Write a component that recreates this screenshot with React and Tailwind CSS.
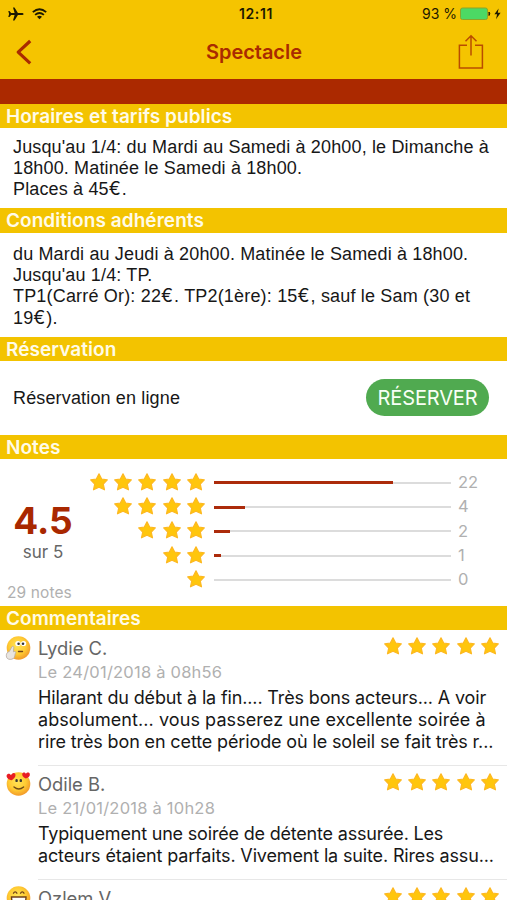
import React from "react";

const RATINGS = [
  { stars: 5, count: 22, percent: 75.6 },
  { stars: 4, count: 4, percent: 13.3 },
  { stars: 3, count: 2, percent: 6.8 },
  { stars: 2, count: 1, percent: 3.2 },
  { stars: 1, count: 0, percent: 0 },
];

const COMMENTS = [
  {
    name: "Lydie C.",
    date: "Le 24/01/2018 à 08h56",
    face: "thinking",
    lines: [
      { text: "Hilarant du début à la fin.... Très bons acteurs... A voir", tracking: "tracking-[-0.14px]" },
      { text: "absolument... vous passerez une excellente soirée à", tracking: "tracking-[0.08px]" },
      { text: "rire très bon en cette période où le soleil se fait très r...", tracking: "tracking-[-0.13px]" },
    ],
  },
  {
    name: "Odile B.",
    date: "Le 21/01/2018 à 10h28",
    face: "love",
    lines: [
      { text: "Typiquement une soirée de détente assurée. Les", tracking: "tracking-[-0.19px]" },
      { text: "acteurs étaient parfaits. Vivement la suite. Rires assu...", tracking: "tracking-[-0.15px]" },
    ],
  },
  { name: "Ozlem V.", date: "", face: "laugh", lines: [] },
];

function Star() {
  return (
    <svg width="18" height="18" viewBox="0 0 18 18" className="block shrink-0">
      <path
        d="M9 .9 L11.7 6 L17.3 6.9 L13.3 11 L14.5 16.8 L9 14.3 L3.5 16.8 L4.7 11 L0.7 6.9 L6.3 6 Z"
        fill="#ffc60c"
        stroke="#fdb822"
        strokeWidth="1.2"
        strokeLinejoin="round"
      />
    </svg>
  );
}

function Stars({ count }) {
  return (
    <div className="flex justify-end gap-[6.3px]">
      {Array.from({ length: count }, (_, i) => (
        <Star key={i} />
      ))}
    </div>
  );
}

function Face({ type }) {
  const id = `face-${type}`;
  return (
    <svg width="26" height="26" viewBox="0 0 26 26" className="block shrink-0">
      <defs>
        <radialGradient id={id} cx="45%" cy="40%" r="60%">
          <stop offset="0" stopColor="#ffe458" />
          <stop offset="0.6" stopColor="#ffcb32" />
          <stop offset="1" stopColor="#f29a2a" />
        </radialGradient>
      </defs>
      <circle cx="13.5" cy="13" r="11.8" fill={`url(#${id})`} />
      {type === "thinking" && (
        <g>
          <ellipse cx="13" cy="8.5" rx="2.7" ry="2.6" fill="#fff" />
          <ellipse cx="18.6" cy="8.5" rx="2.6" ry="2.6" fill="#fff" />
          <circle cx="13.6" cy="8.7" r="1.3" fill="#333" />
          <circle cx="18" cy="8.7" r="1.3" fill="#333" />
          <path d="M13.5 16.5h4" stroke="#70401a" strokeWidth="1.4" strokeLinecap="round" />
          <path
            d="M6.8 12c.6-1.2 2.1-.8 2 .6l-.4 4.2 1.3-.3c1.3-.1 1.4 1.6.5 2.2l-.4 2.3c-.4 2.2-2.2 3.4-4.6 3.4-2.6 0-3.9-1.5-3.9-3.7 0-2.3 1-3.6 3-4.2z"
            fill="#e9e5e0"
            stroke="#b5aaa2"
            strokeWidth="0.8"
          />
        </g>
      )}
      {type === "love" && (
        <g>
          <path d="M11.6 9.3v.6M15.8 9.3v.6" stroke="#3d3a33" strokeWidth="2.4" strokeLinecap="round" />
          <path d="M9 16q4.8 4 9.6 0" fill="none" stroke="#704d18" strokeWidth="1.4" strokeLinecap="round" />
          <path d="M6.8 9.3C3 8.5 1.1 6.3 1.7 4.2c.7-2.1 3.5-2 4.4.1C7.5 1.2 10.3 1.6 10.5 4c.1 2-1.5 3.7-3.7 5.3z" fill="#e81c24" />
          <path d="M20.8 7.6c-2.7-1.6-4.1-3-3.5-4.8.6-1.8 2.8-1.7 3.6 0 1-1.8 3.5-1.6 3.9.2.5 2-1.3 3.5-4 4.6z" fill="#e81c24" />
        </g>
      )}
      {type === "laugh" && (
        <g>
          <path d="M8.2 8.6q2-3.4 4 0M15.3 8.6q2-3.4 4 0" fill="none" stroke="#70401a" strokeWidth="1.3" />
          <path d="M6.5 12h14.5c0 6-3 9.5-7.2 9.5s-7.3-3.5-7.3-9.5z" fill="#fff" stroke="#70401a" strokeWidth="1.4" />
        </g>
      )}
    </svg>
  );
}

function Euro() {
  return <span className="font-['Inter',sans-serif] leading-none tracking-[1px]">€</span>;
}

function SectionTitle({ children }) {
  return (
    <h2 className="h-[24.5px] shrink-0 bg-[#f3c300] pt-px pl-[6px] text-[19px] leading-[24.5px] font-semibold tracking-[0.06px] whitespace-nowrap text-[#fffbe8]">
      {children}
    </h2>
  );
}

function StatusBar() {
  return (
    <div className="grid h-[27px] grid-cols-3 items-center text-[14px] text-[#1d1900]">
      <div className="flex items-center gap-[8px] pl-[8px]">
        <svg width="16" height="14" viewBox="0 0 16 14" fill="currentColor">
          <path d="M15.6 7c0-.7-.8-1.1-1.9-1.1H9.9L6.5.5H5l1.6 5.4H3.1L1.5 4H.3l.8 3-.8 3h1.2l1.6-1.9h3.5L5 13.5h1.5l3.4-5.4h3.8c1.1 0 1.9-.4 1.9-1.1z" />
        </svg>
        <svg width="15" height="12" viewBox="0 0 15 12" fill="none" stroke="currentColor" strokeWidth="1.8">
          <path d="M.8 4.2q6.7-6 13.4 0" />
          <path d="M3.1 6.9q4.4-3.8 8.8 0" />
          <path d="M5 8.8q2.5-1.9 5 0L7.5 11.3z" fill="currentColor" stroke="none" />
        </svg>
      </div>
      <div className="pl-[5px] text-center font-semibold tracking-[0.6px]">12:11</div>
      <div className="flex items-center justify-end pr-[5px]">
        <span className="mr-[3px] whitespace-nowrap">93 %</span>
        <svg width="42" height="14" viewBox="0 0 42 14">
          <rect x="0.5" y="1" width="27" height="11.5" rx="2" fill="#4cd964" stroke="#89a52a" />
          <path d="M29 5q1.5 1.5 0 3.5z" fill="#1d1900" stroke="#1d1900" />
          <path d="M38.6 1.5l-4.2 5.8h2.7l-1.1 5 4.6-6.5h-2.8z" fill="#1d1900" />
        </svg>
      </div>
    </div>
  );
}

function NavBar() {
  return (
    <div className="grid h-[50px] grid-cols-3 items-center text-[#a92b00]">
      <svg width="18" height="26" viewBox="0 0 18 26" className="ml-[15px]">
        <path d="M15.2 2L3.2 13.2l12 11.2" fill="none" stroke="currentColor" strokeWidth="3.2" strokeLinejoin="round" />
      </svg>
      <h1 className="pl-px text-center text-[20px] font-semibold tracking-[-0.05px]">Spectacle</h1>
      <svg width="26" height="36" viewBox="0 0 26 36" className="mr-[23px] justify-self-end" fill="none" stroke="#b94c00" strokeWidth="1.5">
        <path d="M9 11.2H1.4v22.7h23V11.2H17M13 21.5V2M7.5 7.2L13 1.7l5.5 5.5" />
      </svg>
    </div>
  );
}

function Comment({ comment }) {
  return (
    <article className="flex shrink-0 pl-[5px]">
      <div className="pt-[5px]">
        <Face type={comment.face} />
      </div>
      <div className="ml-[7px] flex-1">
        <div className="flex justify-between pt-[7px] pr-[8px]">
          <h3 className="-mt-px text-[18.4px] leading-[24px] tracking-[-0.03px] text-[#666]">{comment.name}</h3>
          <Stars count={5} />
        </div>
        <p className="mt-px h-[23px] text-[16.5px] leading-[23px] tracking-[0.22px] text-[#b0b0b0]">{comment.date}</p>
        <div className="mt-[3px] text-[18px] leading-[22px] whitespace-nowrap text-[#171717]">
          {comment.lines.map((line) => (
            <p key={line.text} className={line.tracking}>{line.text}</p>
          ))}
        </div>
      </div>
    </article>
  );
}

export default function App() {
  return (
    <main className="flex h-[900px] w-[507px] flex-col overflow-hidden bg-white font-['Inter',sans-serif]">
      <header className="h-[79px] shrink-0 bg-[#f5c400]">
        <StatusBar />
        <NavBar />
      </header>
      <div className="h-[24.5px] shrink-0 bg-[#ab2900]" />

      <SectionTitle>Horaires et tarifs publics</SectionTitle>
      <div className="h-[80px] shrink-0 pt-[9px] pl-[13px] font-['Liberation_Sans',sans-serif] text-[18px] leading-[21px] tracking-[0.15px] whitespace-nowrap text-[#171717]">
        <p>Jusqu'au 1/4: du Mardi au Samedi à 20h00, le Dimanche à</p>
        <p>18h00. Matinée le Samedi à 18h00.</p>
        <p className="h-[21px]">Places à 45<Euro />.</p>
      </div>

      <SectionTitle>Conditions adhérents</SectionTitle>
      <div className="h-[104px] shrink-0 pt-[11.5px] pl-[13px] font-['Liberation_Sans',sans-serif] text-[18px] leading-[21.2px] tracking-[0.15px] whitespace-nowrap text-[#171717]">
        <p>du Mardi au Jeudi à 20h00. Matinée le Samedi à 18h00.</p>
        <p>Jusqu'au 1/4: TP.</p>
        <p className="h-[21.2px] tracking-[0.18px]">TP1(Carré Or): 22<Euro />. TP2(1ère): 15<Euro />, sauf le Sam (30 et</p>
        <p className="h-[21.2px]">19<Euro />).</p>
      </div>

      <SectionTitle>Réservation</SectionTitle>
      <div className="flex h-[73.5px] shrink-0 items-center justify-between pr-[18px] pl-[13px]">
        <span className="pt-[2px] font-['Liberation_Sans',sans-serif] text-[18px] tracking-[0.15px] text-[#171717]">Réservation en ligne</span>
        <button className="h-[37px] w-[123px] rounded-full bg-[#50aa50] text-[20px] tracking-[-0.15px] text-[#f8fff5]">
          RÉSERVER
        </button>
      </div>

      <SectionTitle>Notes</SectionTitle>
      <div className="flex h-[146.5px] shrink-0">
        <div className="flex w-[86px] flex-col items-center pt-[42px]">
          <strong className="text-[37px] leading-[40px] font-bold text-[#a92800]">4.5</strong>
          <span className="mt-px text-[17px] leading-[20px] text-[#666]">sur 5</span>
          <span className="mt-[21px] self-start pl-[7px] text-[15.5px] leading-[20px] tracking-[0.1px] whitespace-nowrap text-[#b0b0b0]">29 notes</span>
        </div>
        <div className="flex flex-1 flex-col pt-[10.5px]">
          {RATINGS.map((r) => (
            <div key={r.stars} className="flex h-[24.4px] items-center">
              <div className="w-[119px]">
                <Stars count={r.stars} />
              </div>
              <div className="mt-[2px] ml-[8.5px] flex h-[3px] w-[237px] items-center">
                <div className="h-[3px] bg-[#ac2b0b]" style={{ width: `${r.percent}%` }} />
                <div className="h-[2px] flex-1 bg-[#dcdcdc]" />
              </div>
              <span className="ml-[7.5px] pt-px text-[16.5px] text-[#b0b0b0]">{r.count}</span>
            </div>
          ))}
        </div>
      </div>

      <SectionTitle>Commentaires</SectionTitle>
      <div className="flex flex-col">
        <div className="h-[135px] shrink-0">
          <Comment comment={COMMENTS[0]} />
        </div>
        <div className="ml-[38px] h-px shrink-0 bg-[#e7e7e7]" />
        <div className="h-[112.5px] shrink-0">
          <Comment comment={COMMENTS[1]} />
        </div>
        <div className="ml-[38px] h-px shrink-0 bg-[#e7e7e7]" />
        <Comment comment={COMMENTS[2]} />
      </div>
    </main>
  );
}
